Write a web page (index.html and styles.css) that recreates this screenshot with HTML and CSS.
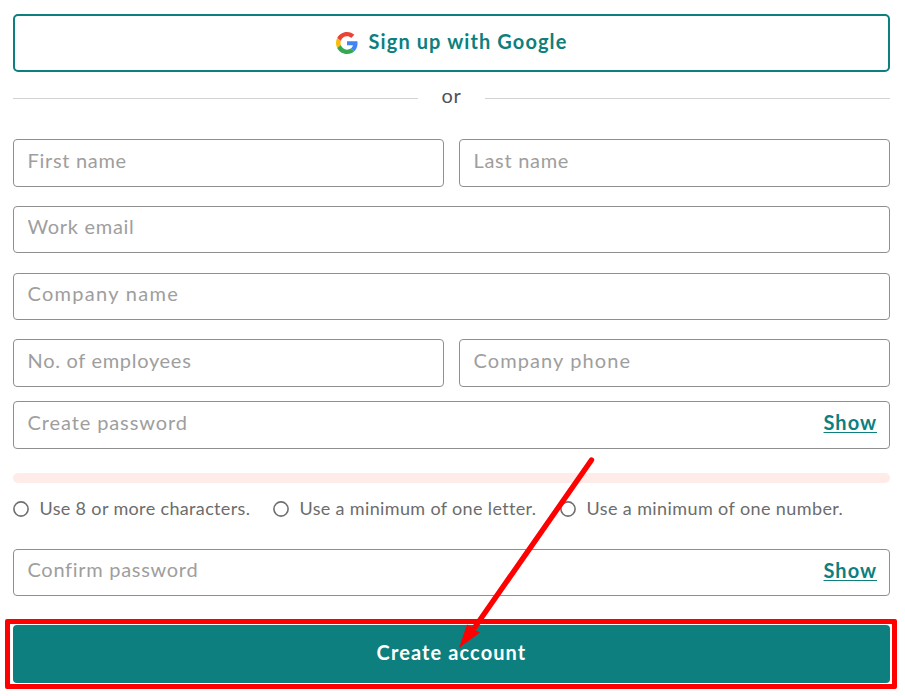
FILE: index.html
```
<!DOCTYPE html>
<html lang="en">
<head>
  <meta charset="UTF-8" />
  <meta name="viewport" content="width=device-width, initial-scale=1.0"/>
  <title>Create account</title>
  <link rel="stylesheet" href="styles.css">
</head>

<body>
  <form class="signup">
    <button type="button" class="google-btn">
      <svg class="google-logo" viewBox="0 0 48 48" aria-hidden="true">
        <path fill="#EA4335" d="M24 9.5c3.54 0 6.71 1.22 9.21 3.6l6.85-6.85C35.9 2.38 30.47 0 24 0 14.62 0 6.51 5.38 2.56 13.22l7.98 6.19C12.43 13.72 17.74 9.5 24 9.5z"/>
        <path fill="#4285F4" d="M46.98 24.55c0-1.57-.15-3.09-.38-4.55H24v9.02h12.94c-.58 2.96-2.26 5.48-4.78 7.18l7.73 6c4.51-4.18 7.09-10.36 7.09-17.65z"/>
        <path fill="#FBBC05" d="M10.53 28.59c-.48-1.45-.76-2.99-.76-4.59s.27-3.14.76-4.59l-7.98-6.19C.92 16.46 0 20.12 0 24c0 3.88.92 7.54 2.56 10.78l7.97-6.19z"/>
        <path fill="#34A853" d="M24 48c6.48 0 11.93-2.13 15.89-5.81l-7.73-6c-2.15 1.45-4.92 2.3-8.16 2.3-6.26 0-11.57-4.22-13.47-9.91l-7.98 6.19C6.51 42.62 14.62 48 24 48z"/>
      </svg>
      <span>Sign up with Google</span>
    </button>

    <div class="divider"><span>or</span></div>

    <div class="row">
      <input class="field" type="text" name="first" placeholder="First name">
      <input class="field" type="text" name="last" placeholder="Last name">
    </div>
    <div class="row row-short">
      <input class="field" type="email" name="email" placeholder="Work email">
    </div>
    <div class="row row-short">
      <input class="field field-company" type="text" name="company" placeholder="Company name">
    </div>
    <div class="row">
      <input class="field" type="text" name="employees" placeholder="No. of employees">
      <input class="field field-phone" type="tel" name="phone" placeholder="Company phone">
    </div>
    <div class="row row-password">
      <input class="field field-password" type="password" name="password" placeholder="Create password">
      <a class="show" href="#">Show</a>
    </div>

    <div class="strength"></div>
    <ul class="rules">
      <li class="rule-length"><svg class="circle" viewBox="0 0 16 16"><circle cx="8" cy="8" r="7.1"/></svg>Use 8 or more characters.</li>
      <li class="rule-letter"><svg class="circle" viewBox="0 0 16 16"><circle cx="8" cy="8" r="7.1"/></svg>Use a minimum of one letter.</li>
      <li class="rule-number"><svg class="circle" viewBox="0 0 16 16"><circle cx="8" cy="8" r="7.1"/></svg>Use a minimum of one number.</li>
    </ul>

    <div class="row row-short row-confirm">
      <input class="field" type="password" name="confirm" placeholder="Confirm password">
      <a class="show" href="#">Show</a>
    </div>

    <div class="highlight">
      <button type="submit" class="submit-btn">Create account</button>
    </div>
  </form>

  <svg class="arrow" viewBox="0 0 140 196" aria-hidden="true">
    <path d="M136.5 6L20 173" stroke="#ff0000" stroke-width="5.4" stroke-linecap="round"/>
    <path d="M4 194L12 170.500L17 173L20 176L25 178.500Z" fill="#ff0000"/>
  </svg>
</body>
</html>
```
FILE: styles.css
```
* {
  box-sizing: border-box;
}

body {
  margin: 0;
  position: relative;
  height: 696px;
  overflow: hidden;
  background: #fff;
  font-family: Lato, sans-serif;
}

.signup {
  display: flex;
  flex-direction: column;
  padding: 14px 15px 0 13px;
}

.google-btn {
  display: flex;
  justify-content: center;
  align-items: center;
  gap: 11px;
  height: 58px;
  padding: 0 0 4px;
  border: 2px solid #0c7f7e;
  border-radius: 5px;
  background: #fff;
  color: #0c7f7e;
  font: bold 20px Lato, sans-serif;
  letter-spacing: 1.1px;
  cursor: pointer;
}

.google-logo {
  width: 22px;
  height: 22px;
  margin-top: 3px;
}

.divider {
  display: flex;
  align-items: center;
  height: 20px;
  margin: 16px 0 31px;
  color: #505057;
  font-size: 20px;
  letter-spacing: 0.7px;
}

.divider::before,
.divider::after {
  content: "";
  flex: 1;
  height: 1px;
  margin-top: 1px;
  background: #d2d2d2;
}

.divider span {
  width: 67px;
  padding-bottom: 6px;
  text-align: center;
}

.row {
  display: flex;
  gap: 15px;
  position: relative;
  height: 48px;
  margin-bottom: 19px;
}

.row-short {
  height: 47px;
  margin-bottom: 20px;
}

.row-short + .row {
  margin-bottom: 19px;
}

.row.row-password {
  margin: -5px 0 24px;
}

.row.row-confirm {
  margin-bottom: 23px;
}

.field {
  flex: 1;
  min-width: 0;
  padding: 0 13.5px 6px;
  border: 1px solid #8f8f8f;
  border-radius: 4px;
  background: #fff;
  font: 20px Lato, sans-serif;
  letter-spacing: 0.7px;
}

.row-short .field {
  padding-bottom: 7px;
}

.field::placeholder {
  color: #9e9e9e;
  opacity: 1;
}

.field-company {
  letter-spacing: 1.3px;
}

.field-phone {
  letter-spacing: 1.1px;
}

.field-password {
  letter-spacing: 0.9px;
}

.show {
  position: absolute;
  top: 9px;
  right: 13px;
  color: #0c7f7e;
  font-size: 20px;
  font-weight: bold;
  line-height: 24px;
  letter-spacing: 1px;
  text-decoration-thickness: 1px;
  text-underline-offset: 2px;
}

.strength {
  height: 10px;
  border-radius: 5px;
  background: #ffebe7;
}

.rules {
  display: flex;
  height: 32px;
  margin: 10px 0 24px;
  padding: 0;
  list-style: none;
  color: #6c6c6c;
  font-size: 18px;
  line-height: 30px;
  letter-spacing: 0.35px;
  white-space: nowrap;
}

.rules li {
  display: flex;
  align-items: center;
  gap: 10.5px;
  height: 30px;
}

.circle {
  width: 16px;
  height: 16px;
  margin-top: 2px;
  fill: none;
  stroke: #6f6f6f;
  stroke-width: 1.6;
}

.rule-length {
  width: 260px;
}

.rule-letter {
  width: 287px;
}

.rule-number {
  letter-spacing: 0.4px;
}

/* red frame sits just outside the button */
.highlight {
  margin: 0 -7px 0 -8px;
  padding: 1px 2px 1px 3px;
  border: 5px solid #ff0000;
  border-radius: 2px;
}

.submit-btn {
  display: block;
  width: 100%;
  height: 58px;
  padding: 0 0 4px;
  border: none;
  border-radius: 4px;
  background: #0c7f7e;
  color: #fff;
  font: bold 20px Lato, sans-serif;
  letter-spacing: 1.1px;
  cursor: pointer;
}

.arrow {
  position: absolute;
  left: 455px;
  top: 454px;
  width: 140px;
  height: 196px;
  fill: none;
  pointer-events: none;
}
```
